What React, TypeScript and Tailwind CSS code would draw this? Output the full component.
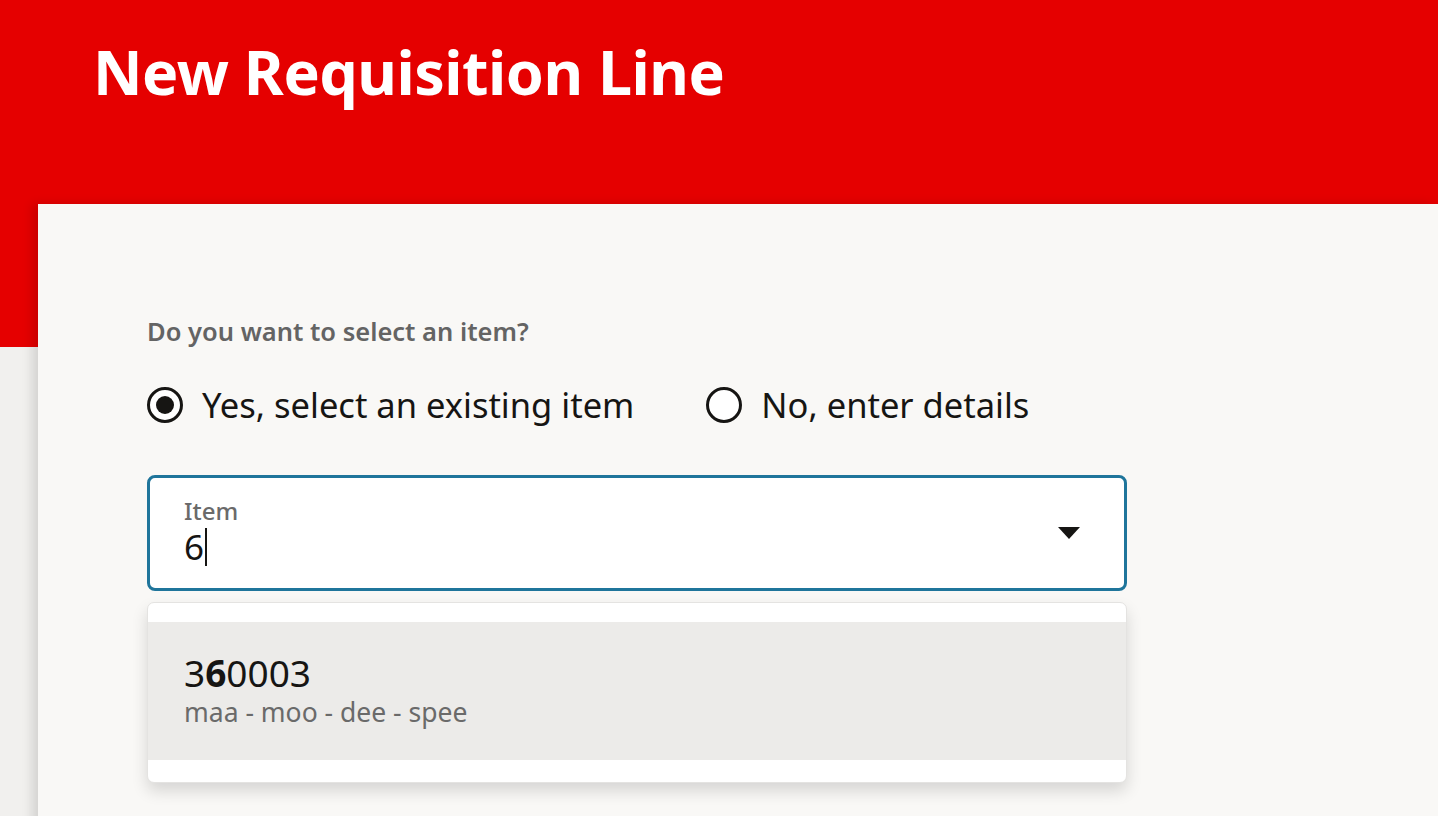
import React from 'react'

const font = { fontFamily: '"Noto Sans", "Open Sans", sans-serif' }

function Radio({ checked, label }: { checked: boolean; label: string }) {
  return (
    <label className="flex items-center gap-[19px] cursor-pointer">
      <span className="flex h-[36px] w-[36px] items-center justify-center rounded-full border-[3px] border-[#161513] bg-white">
        {checked && <span className="h-[18px] w-[18px] rounded-full bg-[#161513]" />}
      </span>
      <span className="text-[34.5px] leading-none text-[#161513]">{label}</span>
    </label>
  )
}

export default function App() {
  return (
    <div className="relative h-[816px] w-full overflow-hidden bg-[#f1f0ee]" style={font}>
      <header className="h-[347px] bg-[#e50000] pl-[93px] pt-[34px]">
        <h1 className="text-[61px] font-bold leading-[76px] text-white tracking-[-0.5px]">New Requisition Line</h1>
      </header>

      <main className="-mt-[143px] ml-[38px] h-[700px] bg-[#f9f8f6] pl-[109px] pt-[110px] shadow-[-6px_0_10px_rgba(0,0,0,0.12)]">
        <p className="text-[25.5px] font-semibold leading-[34px] text-[#646464]">Do you want to select an item?</p>

        <div className="mt-[39px] flex items-center gap-[72px]">
          <Radio checked label="Yes, select an existing item" />
          <Radio checked={false} label="No, enter details" />
        </div>

        <div className="mt-[52px] w-[980px]">
          <div className="relative flex h-[116px] items-center rounded-[8px] border-[3px] border-[#1f759b] bg-white pl-[34px] pr-[44px]">
            <div className="-mt-[2px] flex-1">
              <div className="text-[24px] font-medium leading-[30px] text-[#6a6a6a]">Item</div>
              <div className="flex items-center text-[35px] leading-[42px] text-[#161513]">
                6<span className="ml-[1px] inline-block h-[38px] w-[2px] bg-[#161513]" />
              </div>
            </div>
            <svg width="22" height="12" viewBox="0 0 22 12">
              <path d="M0 0 H22 L11 12 Z" fill="#161513" />
            </svg>
          </div>

          <div className="mt-[11px] rounded-[7px] border border-[#e4e3e1] bg-white pt-[19px] pb-[22px] shadow-[0_8px_16px_rgba(0,0,0,0.14)]">
            <div className="bg-[#ecebe9] pl-[36px] pt-[30px] pb-[30px]">
              <div className="text-[37px] leading-[42px] text-[#161513]">
                3<span className="font-bold">6</span>0003
              </div>
              <div className="text-[26.5px] leading-[36px] text-[#6a6a6a]">maa - moo - dee - spee</div>
            </div>
          </div>
        </div>
      </main>
    </div>
  )
}
